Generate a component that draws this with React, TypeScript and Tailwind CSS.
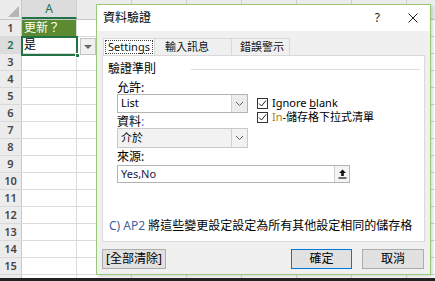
import React from 'react';

const rows = Array.from({ length: 16 }, (_, i) => i + 1);
const cols = ['A', 'B', 'C', 'D', 'E', 'F', 'G', 'H'];

function Chevron() {
  return (
    <svg width="9" height="6" viewBox="0 0 9 6" className="text-[#606060]">
      <path d="M1 1l3.5 3.5L8 1" fill="none" stroke="currentColor" strokeWidth="1" />
    </svg>
  );
}

function Check() {
  return (
    <span className="w-[11px] h-[11px] border border-[#333] bg-white flex items-center justify-center">
      <svg width="9" height="9" viewBox="0 0 9 9">
        <path d="M1 4.5l2.5 2.5L8 1.5" fill="none" stroke="#222" strokeWidth="1" />
      </svg>
    </span>
  );
}

function Sheet() {
  return (
    <div className="flex flex-col">
      {/* Column headers (only A shows; the rest sit under the dialog) */}
      <div className="flex h-[20px] bg-[#ececec] border-b border-[#c8c8c8]">
        <div className="w-[22px] shrink-0 relative border-r border-[#c8c8c8]">
          <div className="absolute right-[2px] bottom-[2px] w-0 h-0 border-l-[11px] border-l-transparent border-b-[11px] border-b-[#b5b5b5]" />
        </div>
        {cols.map((c) => (
          <div
            key={c}
            className={`w-[55px] shrink-0 flex items-center justify-center text-[12px] border-r border-[#d0d0d0] ${
              c === 'A' ? 'bg-[#dcdcdc] text-[#217346] border-b-2 border-b-[#217346]' : 'text-[#444]'
            }`}
          >
            {c === 'A' ? c : ''}
          </div>
        ))}
      </div>
      {rows.map((r) => (
        <div key={r} className="flex h-[17px] border-b border-[#dadada]">
          <div
            className={`w-[22px] shrink-0 flex items-center justify-center text-[11px] font-semibold border-r border-[#c8c8c8] ${
              r === 2 ? 'bg-[#dcdcdc] text-[#217346]' : 'bg-[#ececec] text-[#444]'
            }`}
          >
            {r < 16 ? r : ''}
          </div>
          {cols.map((c) => (
            <div
              key={c}
              className={`w-[55px] shrink-0 border-r border-[#dadada] relative flex items-center px-[2px] text-[12px] ${
                c === 'A' && r === 1 ? 'bg-[#5b8a30] text-white' : 'text-black'
              }`}
            >
              {c === 'A' && r === 1 && '更新？'}
              {c === 'A' && r === 2 && '是'}
            </div>
          ))}
        </div>
      ))}
    </div>
  );
}

function Dialog() {
  return (
    <div className="absolute left-[96px] top-[4px] w-[335px] h-[271px] border border-[#98c878] bg-[#f0f0f0] flex flex-col shadow-[2px_2px_3px_rgba(0,0,0,0.15)]">
      {/* Title bar */}
      <div className="h-[26px] bg-white flex items-center pl-[6px] pr-[12px]">
        <span className="text-[12px] text-black">資料驗證</span>
        <span className="ml-auto text-[12px] text-[#222] mr-[28px]">?</span>
        <svg width="10" height="10" viewBox="0 0 10 10">
          <path d="M0.5 0.5l9 9M9.5 0.5l-9 9" stroke="#222" strokeWidth="1" />
        </svg>
      </div>

      <div className="px-[5px] pt-[7px] flex flex-col">
        {/* Tabs */}
        <div className="flex h-[17px] text-[11px] pl-[1px]">
          <div className="w-[52px] bg-white border border-b-0 border-[#d9d9d9] flex items-center justify-center">
            <span className="border border-dotted border-[#444] px-[2px] leading-[12px] text-[#111]">Settings</span>
          </div>
          <div className="w-[77px] border-t border-r border-[#d9d9d9] flex items-center pl-[10px] text-[#111]">輸入訊息</div>
          <div className="w-[58px] border-t border-r border-[#d9d9d9] flex items-center pl-[8px] text-[#111]">錯誤警示</div>
        </div>

        {/* Panel */}
        <div className="h-[187px] bg-white border border-[#d9d9d9] pl-[5px] pt-[6px] flex flex-col text-[12px] text-black">
          <div className="flex items-center h-[14px]">
            <span>驗證準則</span>
            <div className="flex-1 h-px bg-[#dcdcdc] ml-[35px] mr-[4px]" />
          </div>

          <div className="flex pl-[9px]">
            <div className="w-[131px] flex flex-col">
              <div className="mt-[5px] h-[13px] leading-[13px]">允許:</div>
              <div className="h-[19px] border border-[#b4b4b4] bg-white flex items-center">
                <span className="pl-[3px] text-[11px] flex-1">List</span>
                <div className="w-[16px] h-full border-l border-[#d0d0d0] bg-[#ececec] flex items-center justify-center">
                  <Chevron />
                </div>
              </div>
              <div className="mt-[2px] h-[13px] leading-[13px]">
                資料<span className="text-[#3a6fd0]">:</span>
              </div>
              <div className="h-[20px] border border-[#c8c8c8] bg-[#f2f2f2] flex items-center">
                <span className="pl-[3px] text-[11px] flex-1">介於</span>
                <div className="w-[16px] h-full border-l border-[#d0d0d0] flex items-center justify-center">
                  <Chevron />
                </div>
              </div>
            </div>
            <div className="ml-[9px] pt-[22px] flex flex-col gap-[3px] text-[11px]">
              <div className="flex items-center gap-[4px] h-[11px]">
                <Check />
                <span>
                  Ignore <span className="underline">b</span>lank
                </span>
              </div>
              <div className="flex items-center gap-[4px] h-[11px]">
                <Check />
                <span>
                  <span className="text-[#b07a20]">In</span>-儲存格下拉式清單
                </span>
              </div>
            </div>
          </div>

          <div className="pl-[9px] mt-[2px] h-[14px] leading-[14px]">來源:</div>
          <div className="ml-[9px] mt-[1px] w-[233px] h-[18px] border border-[#b4b4b4] bg-white flex items-center">
            <span className="pl-[3px] text-[11px] text-[#20204a] flex-1">Yes,No</span>
            <div className="w-[15px] h-full border-l border-[#d0d0d0] bg-[#f4f4f4] flex items-center justify-center">
              <svg width="9" height="10" viewBox="0 0 9 10">
                <path d="M4.5 0.5L1 4h2.2v3h2.6V4H8z" fill="#111" />
                <path d="M0.5 9h8" stroke="#111" strokeWidth="1.2" />
              </svg>
            </div>
          </div>

          <div className="mt-auto mb-[8px] h-[14px] leading-[14px] pl-[1px]">
            <span className="text-[#41619c]">C) AP2 </span>將這些變更設定設定為所有其他設定相同的儲存格
          </div>
        </div>

        {/* Buttons */}
        <div className="flex mt-[7px] h-[20px] text-[12px] text-black">
          <button className="w-[64px] h-full bg-[#e1e1e1] border border-[#adadad] flex items-center justify-center">
            [全部清除]
          </button>
          <button className="ml-auto w-[61px] h-full bg-[#e1e1e1] border border-[#0078d7] flex items-center justify-center">
            確定
          </button>
          <button className="ml-[10px] mr-[1px] w-[62px] h-full bg-[#e1e1e1] border border-[#adadad] flex items-center justify-center">
            取消
          </button>
        </div>
      </div>
    </div>
  );
}

export default function App() {
  return (
    <div className="relative w-[435px] h-[281px] overflow-hidden bg-white font-['Noto_Sans','Noto_Sans_CJK_TC',sans-serif]">
      <Sheet />
      {/* A2 selection */}
      <div className="absolute left-[21px] top-[36px] w-[57px] h-[20px] border-2 border-[#217346] pointer-events-none">
        <div className="absolute -right-[4px] -bottom-[4px] w-[5px] h-[5px] bg-[#217346] border border-white" />
      </div>
      {/* Dropdown arrow next to A2 */}
      <div className="absolute left-[80px] top-[38px] w-[16px] h-[17px] bg-[#f0f0f0] border border-[#c4c4c4] flex items-center justify-center">
        <div className="w-0 h-0 border-l-[4px] border-r-[4px] border-t-[4px] border-l-transparent border-r-transparent border-t-[#666]" />
      </div>
      <Dialog />
      <div className="absolute left-0 right-0 top-[278px] h-[3px] bg-[#222]" />
    </div>
  );
}
